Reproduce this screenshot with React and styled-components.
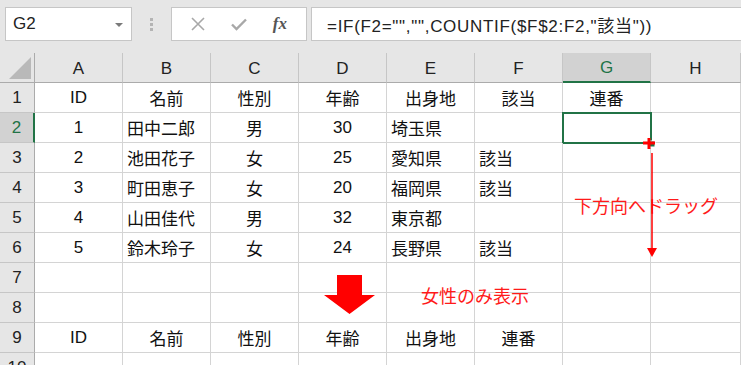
import React from 'react';
import styled, { createGlobalStyle, css } from 'styled-components';

const GlobalStyle = createGlobalStyle`
  html, body {
    margin: 0;
    padding: 0;
    background: #ffffff;
    overflow: hidden;
  }
  body {
    font-family: "Liberation Sans", "Noto Sans CJK JP", sans-serif;
  }
`;

const GREEN = '#217346';
const GRID = '#d4d4d4';
const HEAD_BG = '#e6e6e6';

const Page = styled.div`
  width: 741px;
  height: 365px;
  overflow: hidden;
  background: #fff;
`;

const FormulaBar = styled.div`
  height: 53px;
  background: ${HEAD_BG};
  display: flex;
  align-items: flex-start;
  padding: 7px 0 0 5px;
  box-sizing: border-box;
`;

const Box = styled.div`
  height: 34px;
  background: #fff;
  border: 1px solid #c6c6c6;
  box-sizing: border-box;
  display: flex;
  align-items: center;
`;

const NameBox = styled(Box)`
  width: 127px;
  padding: 0 8px 0 7px;
  justify-content: space-between;
  font-size: 17px;
  color: #222;
`;

const Caret = styled.span`
  width: 0;
  height: 0;
  border-left: 4px solid transparent;
  border-right: 4px solid transparent;
  border-top: 4px solid #7a7a7a;
  margin-top: 2px;
`;

const Grip = styled.div`
  width: 39px;
  height: 34px;
  display: flex;
  flex-direction: column;
  align-items: center;
  justify-content: center;
  gap: 2px;

  span {
    width: 3px;
    height: 3px;
    background: #b4b4b4;
  }
`;

const ButtonGroup = styled(Box)`
  width: 136px;
  justify-content: space-around;
  padding: 0 6px;
`;

const FxText = styled.span`
  font-family: "Liberation Serif", "DejaVu Serif", serif;
  font-style: italic;
  font-weight: bold;
  font-size: 17px;
  color: #555;
`;

const FormulaInput = styled(Box)`
  flex: 1;
  margin-left: 4px;
  border-right: none;
  padding-left: 15px;
  font-size: 17px;
  letter-spacing: 0.7px;
  color: #222;
  white-space: nowrap;
`;

const Sheet = styled.div`
  position: relative;
  display: grid;
  grid-template-columns: 35px repeat(7, 88px) 90px;
  grid-auto-rows: 30px;
  font-size: 17px;
  color: #111;
`;

const Corner = styled.div`
  background: ${HEAD_BG};
  border-right: 1px solid #ababab;
  border-bottom: 1px solid #ababab;
  box-sizing: border-box;
  display: flex;
  align-items: flex-end;
  justify-content: flex-end;
  padding: 0 3px 3px 0;

  &::after {
    content: '';
    width: 22px;
    height: 22px;
    background: #b9b9b9;
    clip-path: polygon(100% 0, 100% 100%, 0 100%);
  }
`;

const ColHead = styled.div`
  background: ${(p) => (p.$active ? '#d2d2d2' : HEAD_BG)};
  color: ${(p) => (p.$active ? GREEN : '#222')};
  border-right: 1px solid #c6c6c6;
  border-bottom: ${(p) => (p.$active ? `2px solid ${GREEN}` : '1px solid #ababab')};
  box-sizing: border-box;
  display: flex;
  align-items: center;
  justify-content: center;
  padding-top: 2px;
`;

const RowHead = styled.div`
  background: ${(p) => (p.$active ? '#d2d2d2' : HEAD_BG)};
  color: ${(p) => (p.$active ? GREEN : '#222')};
  border-right: ${(p) => (p.$active ? `2px solid ${GREEN}` : '1px solid #ababab')};
  border-bottom: 1px solid #c6c6c6;
  box-sizing: border-box;
  display: flex;
  align-items: center;
  justify-content: center;
`;

const Cell = styled.div`
  position: relative;
  border-right: 1px solid ${GRID};
  border-bottom: 1px solid ${GRID};
  box-sizing: border-box;
  display: flex;
  align-items: center;
  justify-content: ${(p) => (p.$align === 'l' ? 'flex-start' : 'center')};
  padding-left: ${(p) => (p.$align === 'l' ? '4px' : '0')};
  white-space: nowrap;

  ${(p) =>
    p.$selected &&
    css`
      &::after {
        content: '';
        position: absolute;
        left: -1px;
        top: -1px;
        right: -2px;
        bottom: -2px;
        border: 2px solid ${GREEN};
        pointer-events: none;
      }
    `}
`;

const Annotation = styled.div`
  position: absolute;
  left: ${(p) => p.$x}px;
  top: ${(p) => p.$y}px;
  font-family: "Noto Sans CJK JP", sans-serif;
  font-size: 18px;
  color: #ff1a1a;
  white-space: nowrap;
  line-height: 24px;
`;

const Overlay = styled.svg`
  position: absolute;
  left: ${(p) => p.$x}px;
  top: ${(p) => p.$y}px;
  overflow: visible;
`;

const cols = ['A', 'B', 'C', 'D', 'E', 'F', 'G', 'H'];

const rows = [
  [['ID'], ['名前'], ['性別'], ['年齢'], ['出身地'], ['該当'], ['連番'], ['']],
  [['1'], ['田中二郎', 'l'], ['男'], ['30'], ['埼玉県', 'l'], [''], ['', 'c', true], ['']],
  [['2'], ['池田花子', 'l'], ['女'], ['25'], ['愛知県', 'l'], ['該当', 'l'], [''], ['']],
  [['3'], ['町田恵子', 'l'], ['女'], ['20'], ['福岡県', 'l'], ['該当', 'l'], [''], ['']],
  [['4'], ['山田佳代', 'l'], ['男'], ['32'], ['東京都', 'l'], [''], [''], ['']],
  [['5'], ['鈴木玲子', 'l'], ['女'], ['24'], ['長野県', 'l'], ['該当', 'l'], [''], ['']],
  [[''], [''], [''], [''], [''], [''], [''], ['']],
  [[''], [''], [''], [''], [''], [''], [''], ['']],
  [['ID'], ['名前'], ['性別'], ['年齢'], ['出身地'], ['連番'], [''], ['']],
  [[''], [''], [''], [''], [''], [''], [''], ['']],
];

const XIcon = () => (
  <svg width="14" height="14" viewBox="0 0 14 14">
    <path d="M1 1 L13 13 M13 1 L1 13" stroke="#a8a8a8" strokeWidth="1.6" fill="none" />
  </svg>
);

const CheckIcon = () => (
  <svg width="16" height="13" viewBox="0 0 16 13">
    <path d="M1 6.5 L5.5 11 L15 1.5" stroke="#a8a8a8" strokeWidth="2.4" fill="none" />
  </svg>
);

export default function App() {
  return (
    <Page>
      <GlobalStyle />
      <FormulaBar>
        <NameBox>
          G2
          <Caret />
        </NameBox>
        <Grip>
          <span />
          <span />
          <span />
        </Grip>
        <ButtonGroup>
          <XIcon />
          <CheckIcon />
          <FxText>fx</FxText>
        </ButtonGroup>
        <FormulaInput>=IF(F2="","",COUNTIF($F$2:F2,"該当"))</FormulaInput>
      </FormulaBar>

      <Sheet>
        <Corner />
        {cols.map((c) => (
          <ColHead key={c} $active={c === 'G'}>
            {c}
          </ColHead>
        ))}
        {rows.map((row, i) => (
          <React.Fragment key={i}>
            <RowHead $active={i === 1}>{i + 1}</RowHead>
            {row.map(([v, align, sel], j) => (
              <Cell key={j} $align={align} $selected={sel}>
                {v}
              </Cell>
            ))}
          </React.Fragment>
        ))}

        <Annotation $x={574} $y={140}>下方向へドラッグ</Annotation>
        <Annotation $x={421} $y={230}>女性のみ表示</Annotation>

        {/* fill handle + drag guide */}
        <Overlay $x={640} $y={82} width="24" height="126">
          <rect x="9" y="6" width="6" height="6" fill={GREEN} stroke="#fff" strokeWidth="1" />
          <path d="M3 8 H15 M9 3 V14" stroke="#ff0000" strokeWidth="3" />
          <path d="M12 18 V114" stroke="#ff0000" strokeWidth="1.5" />
          <polygon points="7,113 17,113 12,122" fill="#ff0000" />
        </Overlay>

        {/* big down arrow */}
        <Overlay $x={324} $y={222} width="51" height="40">
          <polygon points="13,0 38,0 38,20 51,20 25.5,39 0,20 13,20" fill="#ff0000" />
        </Overlay>
      </Sheet>
    </Page>
  );
}
